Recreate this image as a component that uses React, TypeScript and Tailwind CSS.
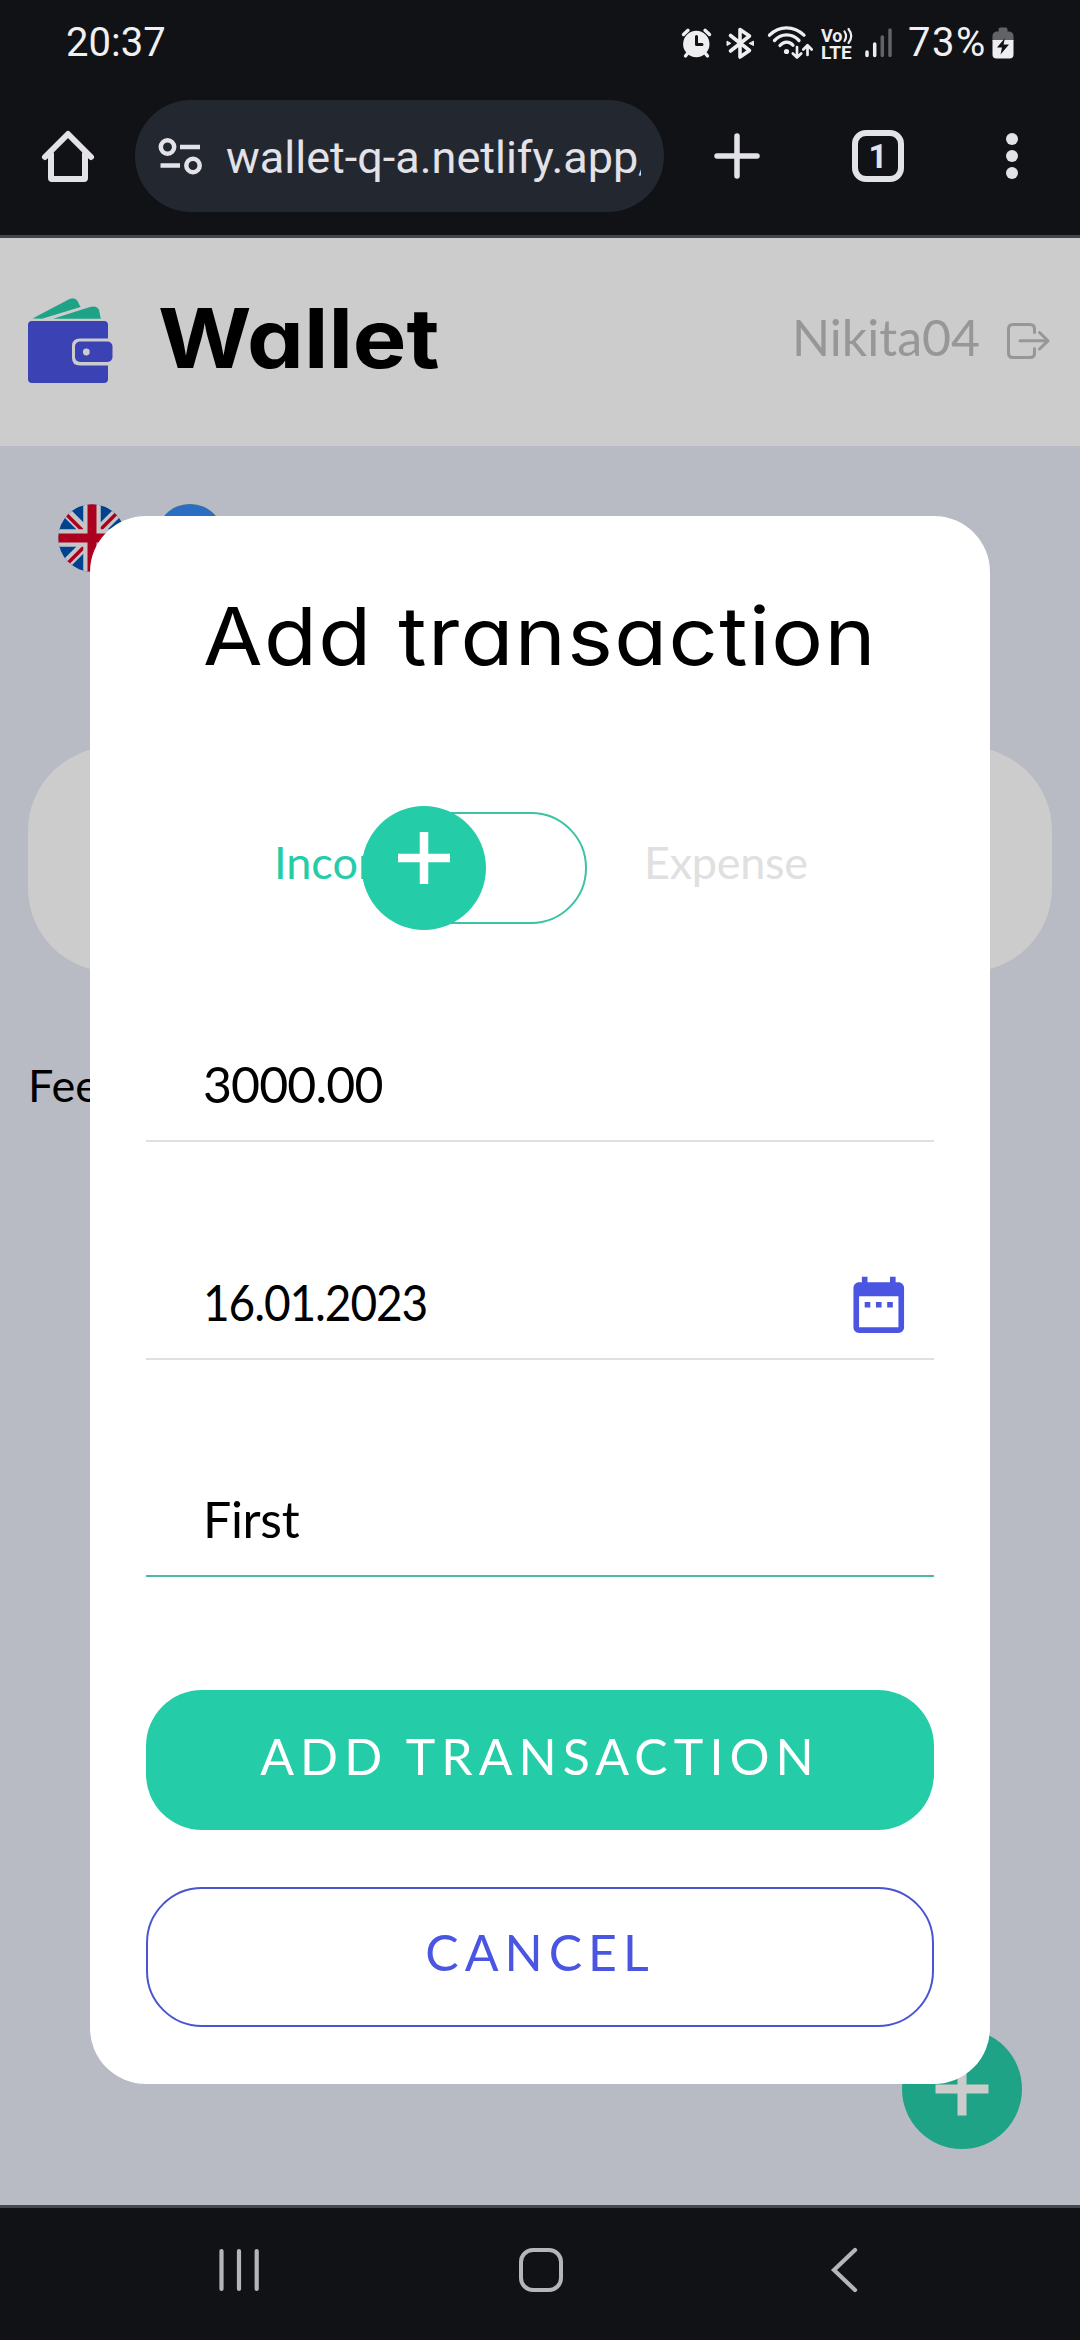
import type { ReactNode } from "react";

function StatusIcons() {
  return (
    <svg width="216" height="36" viewBox="678 25 216 36" fill="none" stroke="#eeeef0" strokeLinecap="round" strokeLinejoin="round">
      {/* alarm */}
      <circle cx="695.3" cy="44" r="13.2" fill="#eeeef0" stroke="none" />
      <path d="M682.5 34.5L687 30.3M708.5 34.5L704 30.3M686.5 53.5L684.5 56M704.500 53.500L706.500 56" strokeWidth="3.4" />
      <path d="M695.500 36.500V44.500H701" stroke="#111216" strokeWidth="3" />
      {/* bluetooth */}
      <path d="M729.500 35.500L748.500 50.500L739 57V29.500L748.500 36L729.500 51" strokeWidth="3.6" />
      <path d="M726 41.500V45.500L729.500 43.500ZM752.500 41.500V45.500L748.500 43.500Z" fill="#eeeef0" strokeWidth="1" />
      {/* wifi */}
      <path d="M768.500 35.200C778 25.300 793 25.300 803 35.200M773.500 40.500C780.500 33 791 33 798 40.500M779 45.500C783 41 788.500 41 792 45.200" strokeWidth="3.3" />
      <circle cx="785.500" cy="51.500" r="2.600" fill="#eeeef0" stroke="none" />
      <path d="M796 47V57M791.800 53.500L796 57.500L800.200 53.500M806.500 55V45.500M802.300 49.500L806.500 45.300L810.700 49.500" strokeWidth="2.700" />
      {/* voice over LTE */}
      <text fontWeight="700" fontFamily="Roboto, sans-serif" fill="#eeeef0" stroke="none">
        <tspan x="820" y="41.500" fontSize="18">Vo</tspan>
        <tspan x="820" y="58.500" fontSize="19">LTE</tspan>
      </text>
      <path d="M843.500 31.500C845.500 34.500 845.500 38 843.500 41M847.500 29C851 33.500 851 38.500 847.500 43" strokeWidth="2.200" />
      {/* signal */}
      <path d="M866 52V55.500M873.700 44V55.500" strokeWidth="3.500" />
      <path d="M881.300 37V55.500M889 30V55.500" stroke="#626366" strokeWidth="3.500" />
    </svg>
  );
}

function Battery() {
  return (
    <svg width="22" height="34" viewBox="0 0 22 34">
      <path d="M6.500 3.500Q6.500 1.500 8.500 1.500H13.500Q15.500 1.500 15.500 3.500V5.500H18Q21.500 6.500 21.500 10V15H.5V10Q.5 6.500 4 5.500H6.500Z" fill="#626366" />
      <path d="M.5 14H21.500V28.500Q21.500 32.500 17.500 32.500H4.500Q.5 32.500 .5 28.500Z" fill="#eeeef0" />
      <path d="M13 12L5 21.500H10L8.500 28.500L17 18.500H11.500Z" fill="#111216" />
    </svg>
  );
}

function BrowserTop() {
  return (
    <header className="flex h-[238px] flex-col border-b-[3px] border-[#44464f] bg-[#111216] font-['Roboto',sans-serif]">
      <div className="flex h-[86px] items-center justify-between pr-[66px] pl-[66px] text-[40px] leading-none text-[#f0f0f2]">
        <span>20:37</span>
        <div className="flex items-center">
          <StatusIcons />
          <span className="ml-[13px] text-[40px] tracking-[1.6px]">73%</span>
          <span className="ml-[5px]"><Battery /></span>
        </div>
      </div>
      <div className="mt-[14px] flex h-[112px] items-center text-[#e3e2e9]">
        <svg className="ml-[40px] shrink-0" width="56" height="56" viewBox="0 0 56 56" fill="none" stroke="currentColor" strokeWidth="6" strokeLinecap="round" strokeLinejoin="round">
          <path d="M5 29L28 6L51 29M11 26V50Q11 51 12 51H44Q45 51 45 50V26" />
        </svg>
        <div className="ml-[39px] flex h-full w-[529px] items-center overflow-hidden rounded-full bg-[#232830] pl-[23px]">
          <svg className="shrink-0" width="46" height="40" viewBox="0 0 46 40" fill="none" stroke="currentColor" strokeWidth="4.500">
            <circle cx="9.500" cy="11" r="6.700" />
            <circle cx="35" cy="29.500" r="6.700" />
            <path d="M22 11H42M2.500 29.500H22" />
          </svg>
          <div className="mt-[3px] ml-[22px] w-[415px] overflow-hidden text-[45px] leading-[60px] whitespace-nowrap">wallet-q-a.netlify.app/</div>
        </div>
        <svg className="ml-[48px]" width="50" height="50" viewBox="0 0 50 50" stroke="currentColor" strokeWidth="5.500" strokeLinecap="round">
          <path d="M25 5V45M5 25H45" />
        </svg>
        <div className="ml-[90px] flex size-[52px] items-center justify-center rounded-[14px] border-[6px] border-[#e3e2e9] text-[33px] leading-none font-bold">1</div>
        <div className="ml-[102px] flex flex-col gap-[5px]">
          <i className="size-3 rounded-full bg-[#e3e2e9]" />
          <i className="size-3 rounded-full bg-[#e3e2e9]" />
          <i className="size-3 rounded-full bg-[#e3e2e9]" />
        </div>
      </div>
    </header>
  );
}

function WalletLogo() {
  return (
    <svg className="mb-[3px]" width="85" height="86" viewBox="0 0 85 86">
      <path d="M4.500 20.500L42 .8Q47-1 49.500 3L52.500 9L14 20.800Z" fill="#1fa387" />
      <path d="M25 20.800L62 9Q69 7 71 12L72.800 20.800Z" fill="#1fa387" />
      <path d="M4 23H76Q80 23 80 27V40.500H52Q44 40.500 44 48V60Q44 67.500 52 67.500H80V81Q80 85 76 85H4Q0 85 0 81V27Q0 23 4 23Z" fill="#3b43b4" />
      <rect x="47" y="43.500" width="37.500" height="20.500" rx="5" fill="#3b43b4" />
      <circle cx="58.300" cy="54" r="3.400" fill="#ccc" />
    </svg>
  );
}

function UkFlag() {
  return (
    <svg width="68" height="68" viewBox="0 0 68 68">
      <clipPath id="round"><circle cx="34" cy="34" r="33.700" /></clipPath>
      <g clipPath="url(#round)">
        <path d="M0 0H68V68H0Z" fill="#004190" />
        <path d="M0 0L68 68M68 0L0 68" stroke="#c5c5c6" strokeWidth="10" />
        <path d="M8 10L26 28M59 9L40 28M9 60L28 41M40 40L60 60" stroke="#ac0020" strokeWidth="3.500" />
        <path d="M34 0V68M0 34H68" stroke="#c5c5c6" strokeWidth="17.500" />
        <path d="M34 0V68M0 34H68" stroke="#ac0020" strokeWidth="9" />
      </g>
    </svg>
  );
}

function UaFlag() {
  return (
    <div className="size-[68px] overflow-hidden rounded-full bg-[#c6ad13]">
      <div className="h-1/2 bg-[#2a6ec4]" />
    </div>
  );
}

function Page() {
  return (
    <main className="relative h-[1967px] bg-[#b8bbc3]">
      <div className="flex h-[208px] items-center bg-[#ccc] pr-[28px] pl-[28px]">
        <WalletLogo />
        <h1 className="ml-[45px] origin-left scale-x-[1.1] pb-[6px] font-['Inter',sans-serif] text-[82px] leading-[100px] font-bold text-black [font-feature-settings:'cv11']">Wallet</h1>
        <div className="ml-auto flex items-center">
          <span className="pb-[10px] text-[50px] leading-[60px] text-[#979797]">Nikita04</span>
          <svg className="ml-[26px]" width="46" height="40" viewBox="0 0 46 40" fill="none" stroke="#979797" strokeWidth="3" strokeLinecap="round" strokeLinejoin="round">
            <path d="M28.500 10.500V7Q28.500 2.500 24 2.500H7Q2.500 2.500 2.500 7V31Q2.500 35.500 7 35.500H24Q28.500 35.500 28.500 31V26.500M14 18.800H42M33.500 10.500L42 18.800L33.500 27" />
          </svg>
        </div>
      </div>
      <div className="mt-[58px] ml-[58px] flex gap-[30px]">
        <UkFlag />
        <UaFlag />
      </div>
      <div className="mx-[28px] mt-[175px] h-[225px] rounded-[84px] bg-[#ccc]" />
      <p className="mt-[83px] ml-[28px] text-[45px] leading-[60px] text-black">Fee</p>
      <button className="absolute right-[58px] bottom-[56px] flex size-[120px] items-center justify-center rounded-full bg-[#1fa387]">
        <svg width="54" height="54" viewBox="0 0 54 54" stroke="#ccc" strokeWidth="9"><path d="M27 .5V53.500M.5 27H53.500" /></svg>
      </button>
    </main>
  );
}

function Field({ children, className }: { children: ReactNode; className: string }) {
  return (
    <div className={`flex h-[112px] items-center justify-between border-b-2 pr-[22px] pb-[2px] pl-[57px] text-[50px] leading-[60px] text-black ${className}`}>
      {children}
    </div>
  );
}

function TransactionModal() {
  return (
    <section className="absolute top-[516px] left-[90px] h-[1568px] w-[900px] rounded-[56px] bg-white px-14">
      <h2 className="flex h-[240px] items-center justify-center font-['Inter',sans-serif] text-[80px] leading-none text-black [font-feature-settings:'cv11']">
        <span className="scale-x-[1.08] tracking-[1.300px] whitespace-nowrap">Add transaction</span>
      </h2>
      <div className="mt-[50px] flex h-[124px] items-center pl-[128px] text-[45px] leading-[54px]">
        <span className="w-[88px] pb-[12px] text-[#24cca7]">Income</span>
        <div className="relative h-[112px] w-[225px] rounded-full border-2 border-[#3cc2a5] bg-white">
          <div className="absolute top-[-8px] left-[-2px] flex size-[124px] items-center justify-center rounded-full bg-[#24cca7] pb-[20px]">
            <svg width="52" height="52" viewBox="0 0 52 52" stroke="#fff" strokeWidth="8.500"><path d="M26 0V52M0 26H52" /></svg>
          </div>
        </div>
        <span className="ml-[57px] pb-[12px] tracking-[-0.300px] text-[#e0e0e0]">Expense</span>
      </div>
      <Field className="mt-[100px] border-[#e0e0e0]">
        <span className="tracking-[-0.900px]">3000.00</span>
      </Field>
      <Field className="mt-[106px] border-[#e0e0e0]">
        <span className="origin-left scale-x-[0.92] tracking-[-1.200px]">16.01.2023</span>
        <svg className="mt-[5px]" width="67.500" height="67.500" viewBox="0 0 24 24" fill="#4a56e2">
          <path d="M9 11H7v2h2v-2zm4 0h-2v2h2v-2zm4 0h-2v2h2v-2zm2-7h-1V2h-2v2H8V2H6v2H5c-1.110 0-1.990.9-1.990 2L3 20c0 1.100.89 2 2 2h14c1.100 0 2-.9 2-2V6c0-1.100-.9-2-2-2zm0 16H5V9h14v11z" />
        </svg>
      </Field>
      <Field className="mt-[105px] border-[#50b9a2]">
        <span className="tracking-[-0.300px]">First</span>
      </Field>
      <button className="mt-[113px] flex h-[140px] w-full items-center justify-center rounded-[56px] bg-[#24cca7] pb-[9px] text-[50px] leading-[60px] tracking-[6.070px] text-white">ADD TRANSACTION</button>
      <button className="mt-[57px] flex h-[140px] w-full items-center justify-center rounded-[56px] border-2 border-[#4a56d0] pb-[10px] text-[50px] leading-[60px] tracking-[6px] text-[#4a56e2]">CANCEL</button>
    </section>
  );
}

function NavBar() {
  return (
    <nav className="flex h-[135px] items-center border-t-[3px] border-[#44484d] bg-[#111216] pb-[8px] pl-[216px]">
      <svg width="46" height="50" viewBox="0 0 46 50" stroke="#b5b6b8" strokeWidth="4.200" strokeLinecap="round"><path d="M5.500 6V44M23 6V44M40.700 6V44" /></svg>
      <div className="ml-[257px] size-11 rounded-[14px] border-4 border-[#b5b6b8]" />
      <svg className="ml-[266px]" width="30" height="50" viewBox="0 0 30 50" fill="none" stroke="#b5b6b8" strokeWidth="4.200" strokeLinecap="round"><path d="M26 5L5 25L26 45" /></svg>
    </nav>
  );
}

export default function App() {
  return (
    <div className="relative h-[2340px] w-[1080px] overflow-hidden font-['Lato',sans-serif]">
      <BrowserTop />
      <Page />
      <NavBar />
      <TransactionModal />
    </div>
  );
}
